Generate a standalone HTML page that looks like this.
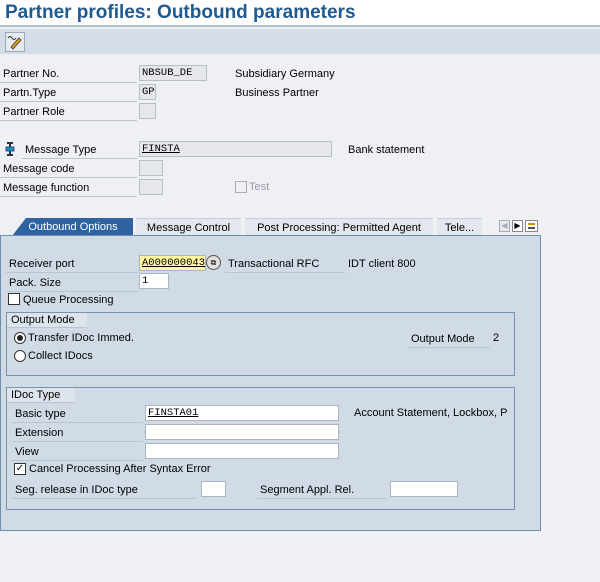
<!DOCTYPE html>
<html><head><meta charset="utf-8"><style>
*{margin:0;padding:0;box-sizing:border-box}
body{width:600px;height:582px;background:#eef0f4;font-family:"Liberation Sans",Arial,sans-serif;font-size:11px;color:#000;position:relative;overflow:hidden}
.a{position:absolute;white-space:nowrap}
.lbl{position:absolute;height:18px;line-height:18px;border-bottom:1px solid #b8c4d2;padding-left:3px}
.f{position:absolute;height:16px;border:1px solid #a9b5c3;background:#fff;font-family:"Liberation Mono",monospace;font-size:10.5px;line-height:15px;padding-left:2px}
.ro{background:#e5e7ea;border-color:#b7bec8}
.cb{position:absolute;width:12px;height:12px;border:1px solid #333;background:#fff}
.rad{position:absolute;width:12px;height:12px;border:1px solid #333;border-radius:50%;background:#fff}
.grp{position:absolute;border:1px solid #7893b2}
.gt{position:absolute;height:15px;background:#dde4ec;line-height:15px;padding-left:4px;border-bottom:1px solid #b8c4d2}
.tab{position:absolute;top:218px;height:17px;line-height:18px;text-align:center;background:#e3e8ee;border-top:1px solid #c5ced9}
</style></head><body>
<div class="a" style="left:0;top:0;width:600px;height:27px;background:#fff;border-bottom:2px solid #b4c0cd"></div>
<div class="a" style="left:5px;top:2px;font-size:19px;font-weight:bold;color:#215a8f">Partner profiles: Outbound parameters</div>
<div class="a" style="left:0;top:29px;width:600px;height:25px;background:#d4dde7"></div>
<div class="a" style="left:5px;top:32px;width:20px;height:20px;background:#e6ebf0;border:1px solid #9aa8b8">
<svg width="18" height="18" viewBox="0 0 18 18"><path d="M5 14 L13 5 L15 7 L7 16 Z" fill="#e8a020" stroke="#333" stroke-width="0.8"/><path d="M2 5 q2-3 4 0 q2 3 4 0" fill="none" stroke="#333" stroke-width="1"/></svg></div>

<div class="lbl" style="left:0;top:65px;width:137px">Partner No.</div>
<div class="f ro" style="left:139px;top:65px;width:68px">NBSUB_DE</div>
<div class="a" style="left:235px;top:68px">Subsidiary Germany</div>
<div class="lbl" style="left:0;top:84px;width:137px">Partn.Type</div>
<div class="f ro" style="left:139px;top:84px;width:17px">GP</div>
<div class="a" style="left:235px;top:87px">Business Partner</div>
<div class="lbl" style="left:0;top:103px;width:137px">Partner Role</div>
<div class="f ro" style="left:139px;top:103px;width:17px"></div>

<svg class="a" style="left:5px;top:142px" width="10" height="14" viewBox="0 0 10 14"><rect x="2" y="0" width="6" height="2" fill="#234"/><rect x="4" y="2" width="2" height="10" fill="#234"/><rect x="1" y="5" width="8" height="4" fill="#1a8fd0" stroke="#234" stroke-width="0.8"/><rect x="2" y="12" width="6" height="2" fill="#234"/></svg>
<div class="lbl" style="left:22px;top:141px;width:115px">Message Type</div>
<div class="f ro" style="left:139px;top:141px;width:193px;text-decoration:underline">FINSTA</div>
<div class="a" style="left:348px;top:144px">Bank statement</div>
<div class="lbl" style="left:0;top:160px;width:137px">Message code</div>
<div class="f ro" style="left:139px;top:160px;width:24px"></div>
<div class="lbl" style="left:0;top:179px;width:137px">Message function</div>
<div class="f ro" style="left:139px;top:179px;width:24px"></div>
<div class="cb" style="left:235px;top:181px;border-color:#aab;background:#eef0f4"></div>
<div class="a" style="left:249px;top:181px;color:#99a">Test</div>

<svg class="a" style="left:12px;top:218px" width="121" height="18"><path d="M0 18 L14 0 L121 0 L121 18 Z" fill="#2e63a0"/></svg>
<div class="a" style="left:20px;top:218px;width:106px;height:17px;line-height:18px;text-align:center;color:#fff">Outbound Options</div>
<div class="tab" style="left:136px;width:105px">Message Control</div>
<div class="tab" style="left:245px;width:188px">Post Processing: Permitted Agent</div>
<div class="tab" style="left:437px;width:45px">Tele...</div>
<div class="a" style="left:499px;top:220px;width:11px;height:12px;border:1px solid #aab;background:#e6e9ee;color:#aab;font-size:8px;text-align:center;line-height:10px">◀</div>
<div class="a" style="left:512px;top:220px;width:11px;height:12px;border:1px solid #889;background:#fff;font-size:8px;text-align:center;line-height:10px">▶</div>
<div class="a" style="left:525px;top:220px;width:13px;height:12px;border:1px solid #889;background:#fff"><div style="margin:2px;height:6px;border-top:2px solid #d88a00;border-bottom:2px solid #555"></div></div>

<div class="a" style="left:0;top:235px;width:541px;height:296px;background:#d1dbe6;border:1px solid #6f8db1"></div>
<div class="lbl" style="left:6px;top:255px;width:132px">Receiver port</div>
<div class="f" style="left:139px;top:255px;width:67px;background:#fff7a0;text-decoration:underline">A000000043</div>
<div class="a" style="left:206px;top:255px;width:15px;height:15px;border-radius:50%;background:#e0e0e0;border:1px solid #555;font-size:8px;line-height:13px;text-align:center">⧉</div>
<div class="lbl" style="left:225px;top:255px;width:120px">Transactional RFC</div>
<div class="a" style="left:348px;top:258px">IDT client 800</div>
<div class="lbl" style="left:6px;top:274px;width:132px">Pack. Size</div>
<div class="f" style="left:139px;top:273px;width:30px">1</div>
<div class="cb" style="left:8px;top:293px"></div>
<div class="a" style="left:23px;top:294px">Queue Processing</div>

<div class="grp" style="left:6px;top:312px;width:509px;height:64px"></div>
<div class="gt" style="left:7px;top:313px;width:80px">Output Mode</div>
<div class="rad" style="left:14px;top:332px"><div style="margin:2px;width:6px;height:6px;border-radius:50%;background:#222"></div></div>
<div class="a" style="left:28px;top:332px">Transfer IDoc Immed.</div>
<div class="rad" style="left:14px;top:350px"></div>
<div class="a" style="left:28px;top:350px">Collect IDocs</div>
<div class="lbl" style="left:408px;top:330px;width:82px">Output Mode</div>
<div class="a" style="left:493px;top:332px">2</div>

<div class="grp" style="left:6px;top:387px;width:509px;height:123px"></div>
<div class="gt" style="left:7px;top:388px;width:68px">IDoc Type</div>
<div class="lbl" style="left:12px;top:405px;width:131px">Basic type</div>
<div class="f" style="left:145px;top:405px;width:194px;text-decoration:underline">FINSTA01</div>
<div class="a" style="left:354px;top:407px;width:154px;overflow:hidden">Account Statement, Lockbox, Pos</div>
<div class="lbl" style="left:12px;top:424px;width:131px">Extension</div>
<div class="f" style="left:145px;top:424px;width:194px"></div>
<div class="lbl" style="left:12px;top:443px;width:131px">View</div>
<div class="f" style="left:145px;top:443px;width:194px"></div>
<div class="cb" style="left:14px;top:463px;font-size:10px;line-height:10px;text-align:center">✓</div>
<div class="a" style="left:29px;top:463px">Cancel Processing After Syntax Error</div>
<div class="lbl" style="left:12px;top:481px;width:185px">Seg. release in IDoc type</div>
<div class="f" style="left:201px;top:481px;width:25px"></div>
<div class="lbl" style="left:257px;top:481px;width:130px">Segment Appl. Rel.</div>
<div class="f" style="left:390px;top:481px;width:68px"></div>
</body></html>
